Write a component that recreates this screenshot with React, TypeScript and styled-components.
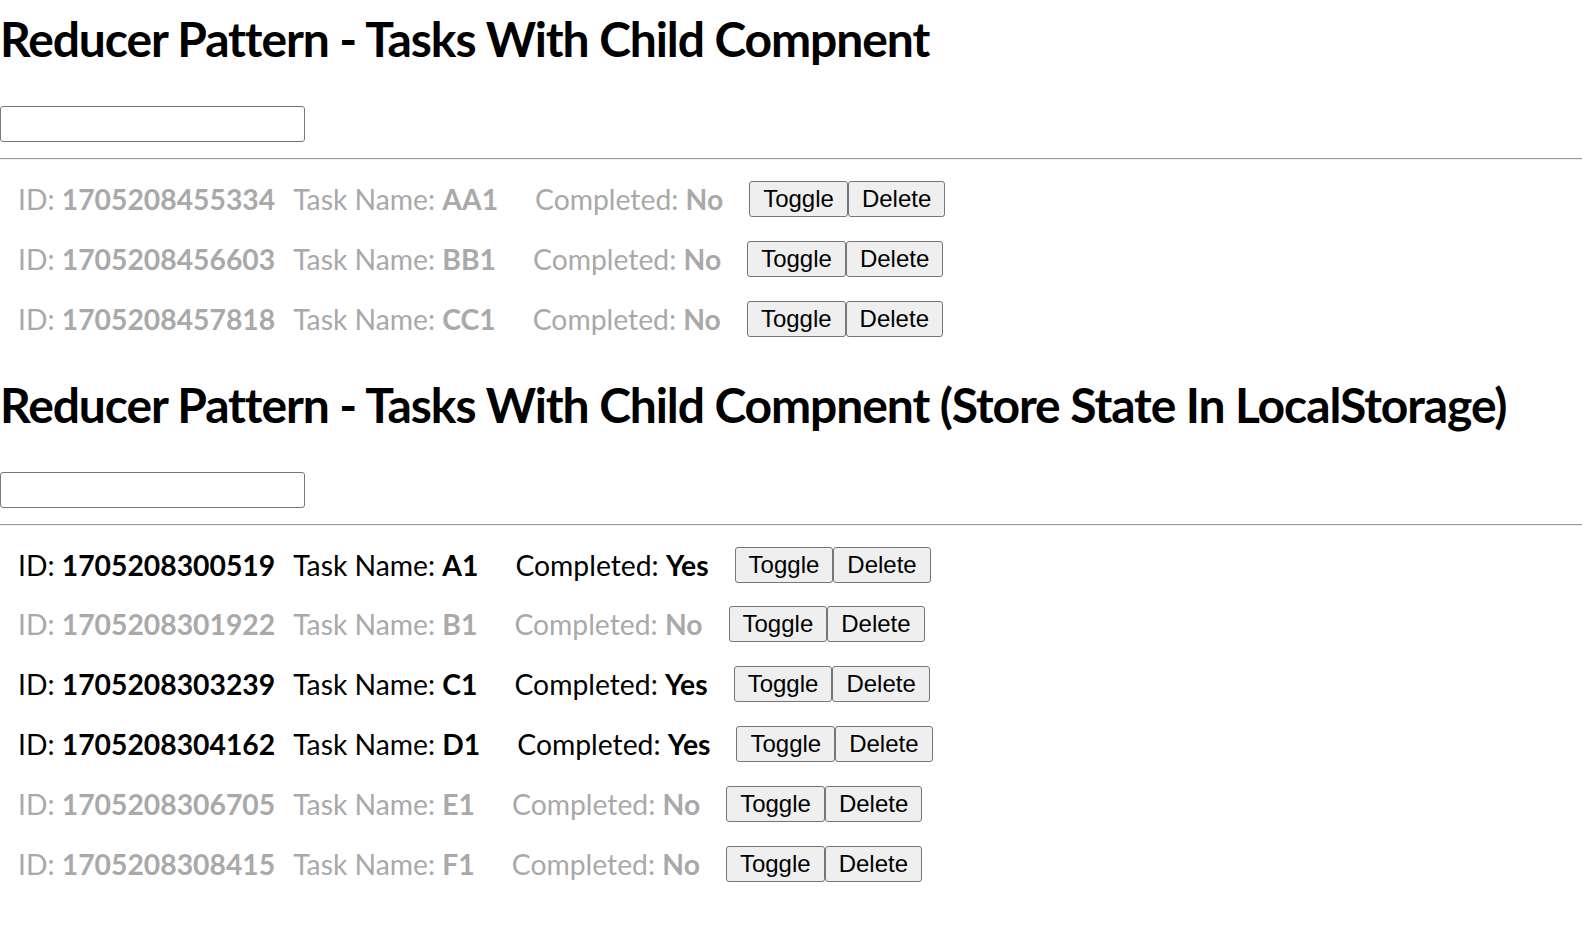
import React from "react";
import styled, { createGlobalStyle } from "styled-components";

const GlobalStyle = createGlobalStyle`
  html, body {
    margin: 0;
    padding: 0;
    background: #ffffff;
  }
  body {
    font-family: Lato, "Open Sans", sans-serif;
    color: #000000;
  }
`;

const Page = styled.div`
  display: flex;
  flex-direction: column;
`;

const Section = styled.section`
  display: flex;
  flex-direction: column;
  margin-bottom: 29px;
`;

const Title = styled.h1`
  margin: 0;
  font-family: Lato, "Open Sans", sans-serif;
  font-weight: 700;
  font-size: 48px;
  letter-spacing: -1.1px;
  line-height: 78px;
  white-space: nowrap;
`;

const TextInput = styled.input`
  margin: 28px 0 0 0;
  width: 305px;
  height: 36px;
  box-sizing: border-box;
  border: 1px solid #767676;
  border-radius: 3px;
  padding: 0 6px;
  font-size: 23px;
  background: #fff;
`;

const Rule = styled.hr`
  margin: 16px 0 0 0;
  border: 0;
  border-top: 1px solid #9a9a9a;
  border-bottom: 1px solid #eeeeee;
  height: 0;
`;

const List = styled.ul`
  list-style: none;
  margin: 21px 0 0 0;
  padding: 0 0 0 18px;
  display: flex;
  flex-direction: column;
  gap: 23.8px;
`;

const Row = styled.li<{ $done: boolean }>`
  display: flex;
  align-items: center;
  height: 36px;
  font-size: 28.3px;
  color: ${(p) => (p.$done ? "#000000" : "#a9a9a9")};
  white-space: nowrap;
`;

const Field = styled.span<{ $gap: number }>`
  margin-right: ${(p) => p.$gap}px;
`;

const Value = styled.b`
  font-weight: 700;
`;

const Buttons = styled.div`
  display: flex;
`;

const Button = styled.button`
  height: 36px;
  box-sizing: border-box;
  margin: 0;
  padding: 0 13px;
  border: 1px solid #767676;
  border-radius: 3px;
  background: #efefef;
  color: #000;
  font-family: "Liberation Sans", Arial, sans-serif;
  font-size: 24px;
  cursor: pointer;
`;

type Task = { id: number; name: string; done: boolean };

const first: Task[] = [
  { id: 1705208455334, name: "AA1", done: false },
  { id: 1705208456603, name: "BB1", done: false },
  { id: 1705208457818, name: "CC1", done: false },
];

const second: Task[] = [
  { id: 1705208300519, name: "A1", done: true },
  { id: 1705208301922, name: "B1", done: false },
  { id: 1705208303239, name: "C1", done: true },
  { id: 1705208304162, name: "D1", done: true },
  { id: 1705208306705, name: "E1", done: false },
  { id: 1705208308415, name: "F1", done: false },
];

function TaskList({ title, tasks }: { title: string; tasks: Task[] }) {
  return (
    <Section>
      <Title>{title}</Title>
      <TextInput type="text" />
      <Rule />
      <List>
        {tasks.map((t) => (
          <Row key={t.id} $done={t.done}>
            <Field $gap={18}>
              ID: <Value>{t.id}</Value>
            </Field>
            <Field $gap={37}>
              Task Name: <Value>{t.name}</Value>
            </Field>
            <Field $gap={26}>
              Completed: <Value>{t.done ? "Yes" : "No"}</Value>
            </Field>
            <Buttons>
              <Button>Toggle</Button>
              <Button>Delete</Button>
            </Buttons>
          </Row>
        ))}
      </List>
    </Section>
  );
}

export default function App() {
  return (
    <Page>
      <GlobalStyle />
      <TaskList title="Reducer Pattern - Tasks With Child Compnent" tasks={first} />
      <TaskList
        title="Reducer Pattern - Tasks With Child Compnent (Store State In LocalStorage)"
        tasks={second}
      />
    </Page>
  );
}
